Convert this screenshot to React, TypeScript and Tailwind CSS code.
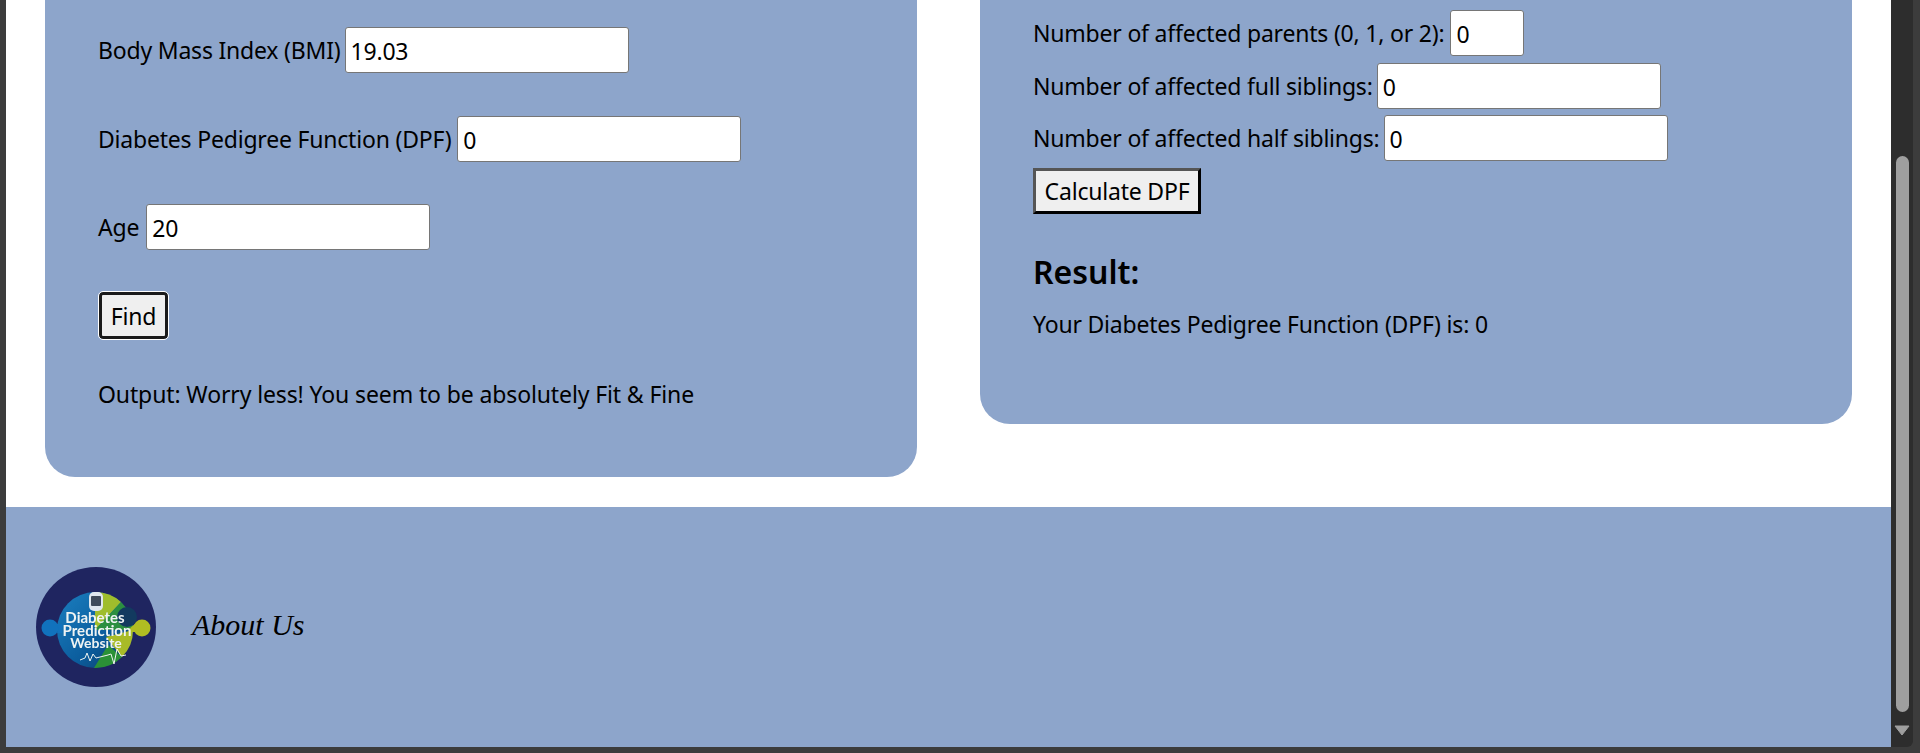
const textClass = "text-[23px] leading-[31px] tracking-[-0.2px] text-black";
const fieldClass =
  "h-[46px] rounded-[3px] border border-[#767676] bg-white px-[5px] pt-[1px] outline-none";

function Field({
  label,
  value,
  inputClass = "w-[284px]",
  gapClass = "gap-[6px]",
}: {
  label: string;
  value: string;
  inputClass?: string;
  gapClass?: string;
}) {
  return (
    <label className={`flex items-center ${gapClass} ${textClass}`}>
      <span className="pt-[1px]">{label}</span>
      <input className={`${fieldClass} ${inputClass}`} defaultValue={value} readOnly />
    </label>
  );
}

function Logo() {
  return (
    <svg width="120" height="120" viewBox="0 0 120 120" className="shrink-0 blur-[0.4px]">
      <defs>
        <linearGradient id="disc" x1="0" y1="0" x2="1" y2="1">
          <stop offset="0" stopColor="#1b7fc0" />
          <stop offset="0.6" stopColor="#0b5c9c" />
          <stop offset="1" stopColor="#10375f" />
        </linearGradient>
      </defs>
      <circle cx="60" cy="60" r="60" fill="#1f2560" />
      <circle cx="59" cy="63" r="38" fill="url(#disc)" />
      <path d="M59 25 A38 38 0 0 1 85 35 L59 63 Z" fill="#9fbd2c" />
      <path d="M85 35 A38 38 0 0 1 97 63 L59 63 Z" fill="#2c8f40" />
      <path d="M97 63 A38 38 0 0 1 86 90 L70 70 Z" fill="#a8bb28" />
      <path d="M86 90 A38 38 0 0 1 58 101 L72 78 Z" fill="#2b9136" />
      <circle cx="91" cy="50" r="10" fill="#123a5f" />
      <circle cx="14" cy="61" r="8.5" fill="#1172bd" />
      <circle cx="106" cy="61" r="8.5" fill="#b0bd22" />
      <path d="M20 57 Q24 61 21 66 L26 66 L26 57 Z" fill="#1172bd" />
      <path d="M99 57 Q94 60 92 65 L100 65 Z" fill="#b0bd22" />
      <rect x="53" y="25" width="14" height="19" rx="5" fill="#dfe6ee" />
      <rect x="55" y="29" width="10" height="10" rx="1" fill="#3f4a5a" />
      <g fill="#eef3f3" fontFamily="Lato, 'Noto Sans', sans-serif" fontWeight="700" textAnchor="middle">
        <text x="59" y="56" fontSize="15">Diabetes</text>
        <text x="61" y="69" fontSize="15">Prediction</text>
        <text x="60" y="81" fontSize="14">Website</text>
      </g>
      <path
        d="M44 93 L49 91 L51 86 L54 94 L57 87 L60 91 L72 88 L75 87 L78 97 L81 82 L85 89 L90 88"
        fill="none"
        stroke="#eef3f0"
        strokeWidth="1"
      />
    </svg>
  );
}

export default function App() {
  return (
    <div className="flex h-[753px] w-[1920px] overflow-hidden bg-[#3c3c3c] pb-[6px] pl-[6px] pr-[7px] font-['Noto_Sans',sans-serif]">
      <main className="flex h-full w-[1885px] flex-col bg-white">
        <div className="flex h-[507px] items-start gap-[63px] pl-[39px]">
          <section className="flex h-[477px] w-[872px] flex-col items-start rounded-b-[30px] bg-[#8da5cb] pl-[53px] pt-[27px]">
            <Field label="Body Mass Index (BMI)" value="19.03" gapClass="gap-[4px]" />
            <div className="mt-[43px]">
              <Field label="Diabetes Pedigree Function (DPF)" value="0" />
            </div>
            <div className="mt-[42px]">
              <Field label="Age" value="20" gapClass="gap-[7px]" />
            </div>
            <button className={`ml-px mt-[42px] h-[47px] w-[69px] rounded-[4px] border-[3px] border-[#1a1a1a] bg-[#efefef] pt-[1px] outline outline-1 outline-white ${textClass}`}>
              Find
            </button>
            <p className="mt-[40px] text-[23px] leading-[31px] tracking-[-0.12px] text-black">
              Output: Worry less! You seem to be absolutely Fit &amp; Fine
            </p>
          </section>
          <section className="flex h-[424px] w-[872px] flex-col items-start rounded-b-[30px] bg-[#8da5cb] pl-[53px] pt-[10px]">
            <Field label="Number of affected parents (0, 1, or 2):" value="0" inputClass="w-[74px]" />
            <div className="mt-[7px]">
              <Field label="Number of affected full siblings:" value="0" gapClass="gap-[4px]" />
            </div>
            <div className="mt-[6px]">
              <Field label="Number of affected half siblings:" value="0" gapClass="gap-[4px]" />
            </div>
            <button className={`mt-[7px] h-[46px] w-[168px] border-[3px] border-b-black border-l-[#555555] border-r-black border-t-[#555555] bg-[#efefef] ${textClass}`}>
              Calculate DPF
            </button>
            <h2 className="mt-[36px] text-[32px] font-semibold leading-[44px] text-black">Result:</h2>
            <p className={`mt-[15px] ${textClass}`}>Your Diabetes Pedigree Function (DPF) is: 0</p>
          </section>
        </div>
        <footer className="flex h-[240px] items-start gap-[36px] bg-[#8da5cb] pl-[30px] pt-[60px]">
          <Logo />
          <a className="mt-[35px] font-['Liberation_Serif',serif] text-[30px] italic text-black">About Us</a>
        </footer>
      </main>
      <div className="flex h-full w-[22px] flex-col items-center rounded-br-[6px] bg-[#2d2d2d] pt-[156px]">
        <div className="h-[556px] w-[13px] rounded-full bg-[#9f9f9f]" />
        <svg width="16" height="11" viewBox="0 0 16 11" className="mt-[13px]">
          <path d="M1 1 H15 L8 10 Z" fill="#9f9f9f" stroke="#9f9f9f" strokeLinejoin="round" />
        </svg>
      </div>
    </div>
  );
}
